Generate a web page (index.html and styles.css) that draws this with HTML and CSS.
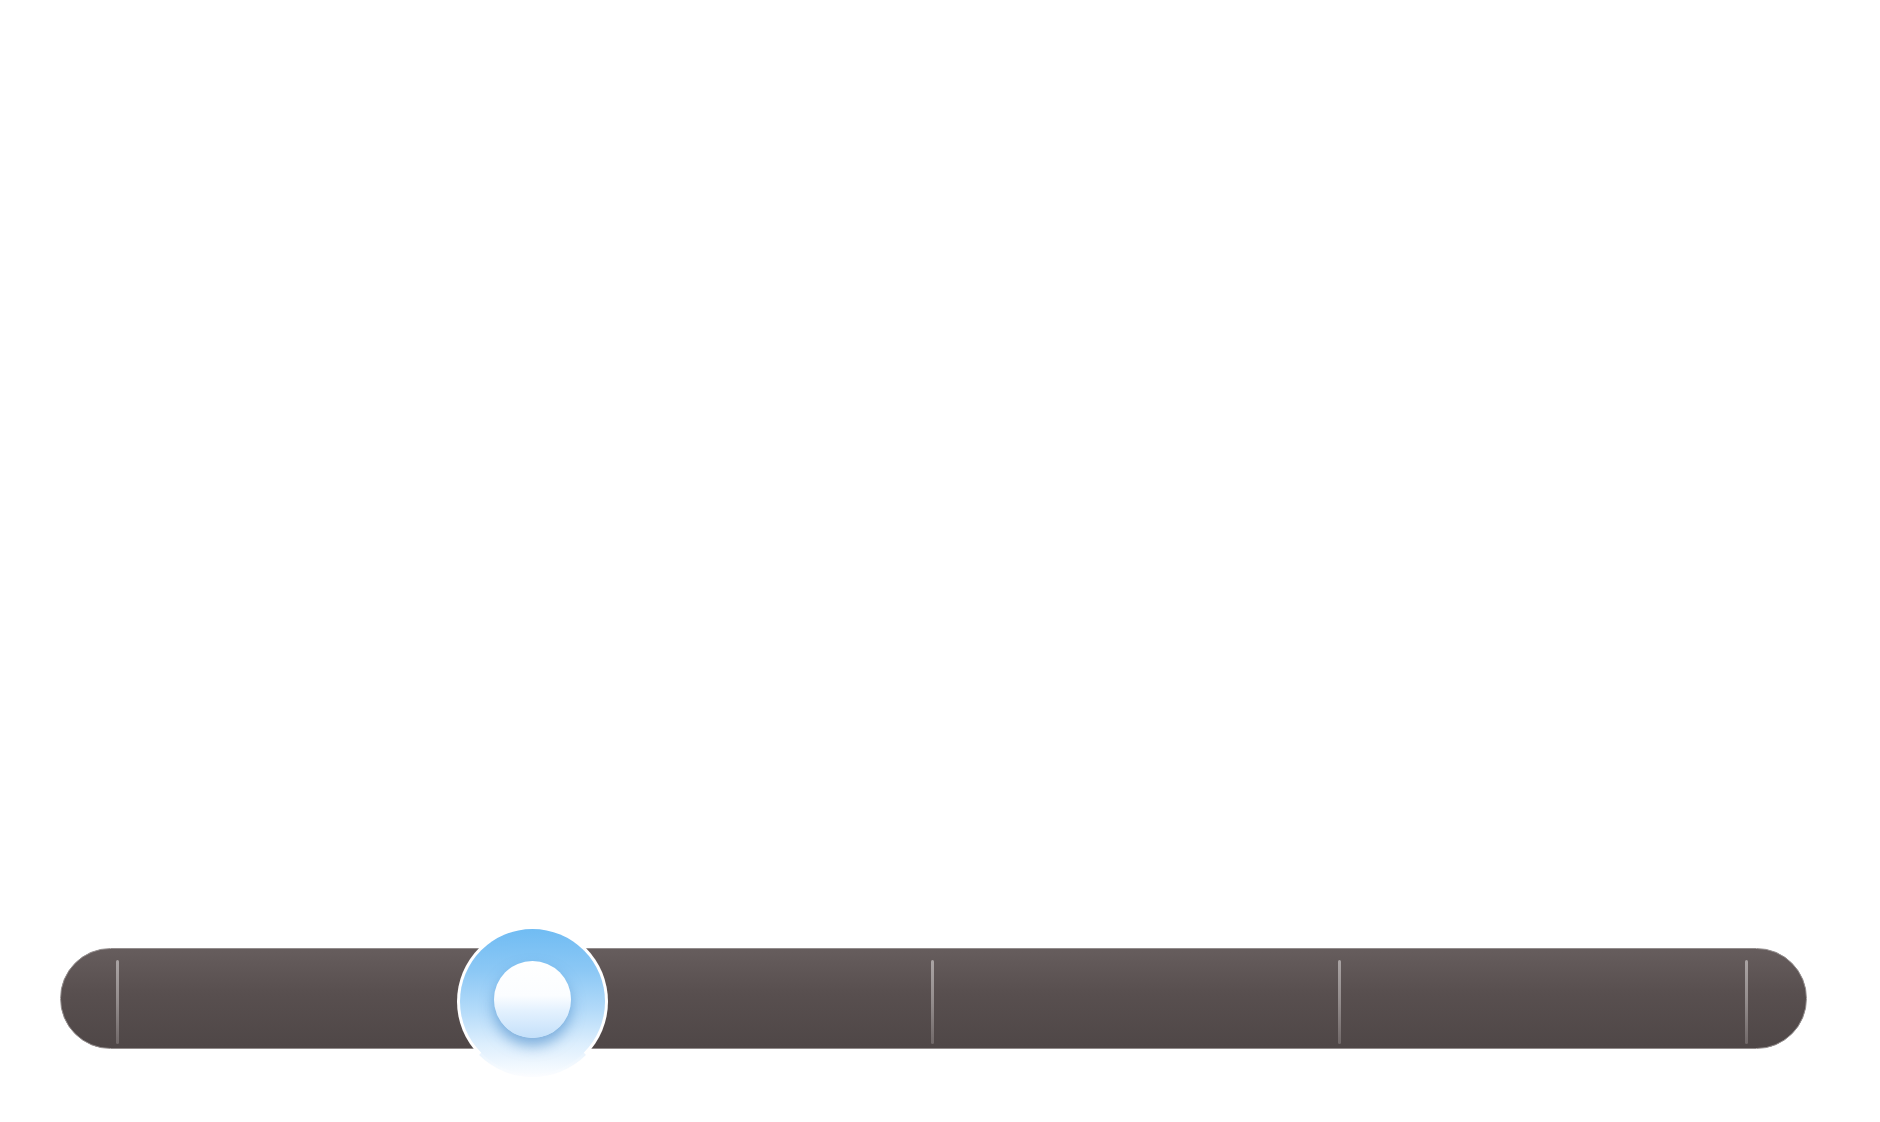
FILE: index.html
```html
<!DOCTYPE html>
<html>
<head>
<meta charset="utf-8">
<link rel="stylesheet" href="styles.css">
</head>
<body>
<div class="page">
  <div class="slider">
    <div class="ticks">
      <span class="tick"></span>
      <span class="tick"></span>
      <span class="tick"></span>
      <span class="tick"></span>
      <span class="tick"></span>
    </div>
    <div class="knob"><div class="knob-core"></div></div>
  </div>
</div>
</body>
</html>
```
FILE: styles.css
```css
html, body {
  margin: 0;
  padding: 0;
  background: #fff;
  font-family: "Liberation Sans", Arial, sans-serif;
}
.page {
  width: 1880px;
  height: 1122px;
  box-sizing: border-box;
  padding: 948px 0 0 60px;
  overflow: hidden;
}
.slider {
  position: relative;
  width: 1747px;
  height: 101px;
  box-sizing: border-box;
  border-radius: 9999px;
  border: 1.5px solid #928c8c;
  background: linear-gradient(180deg, #665d5d 0%, #584f4f 45%, #4f4747 100%);
}
.ticks {
  display: flex;
  justify-content: space-between;
  padding: 11px 58px 0 55px;
  height: 84px;
}
.tick {
  width: 3px;
  height: 84px;
  border-radius: 2px;
  background: linear-gradient(180deg, #aaa4a4 0%, #938c8c 50%, #716969 100%);
}
.knob {
  position: absolute;
  left: 396px;
  top: -23px;
  width: 151px;
  height: 151px;
  box-sizing: border-box;
  border-radius: 50%;
  border: 3px solid #fff;
  border-bottom-color: rgba(255,255,255,0.2);
  background: linear-gradient(180deg, #6ebbf3 0%, #8cc8f5 30%, #b2daf9 55%, #dceefd 78%, #fbfdff 100%) border-box;
}
.knob-core {
  position: absolute;
  left: 34px;
  top: 32px;
  width: 77px;
  height: 77px;
  border-radius: 50%;
  background: linear-gradient(180deg, #ffffff 0%, #fbfdff 45%, #e3f1fe 65%, #c4e0fa 100%);
  box-shadow: 0 8px 14px rgba(55, 125, 195, 0.55);
}
```
